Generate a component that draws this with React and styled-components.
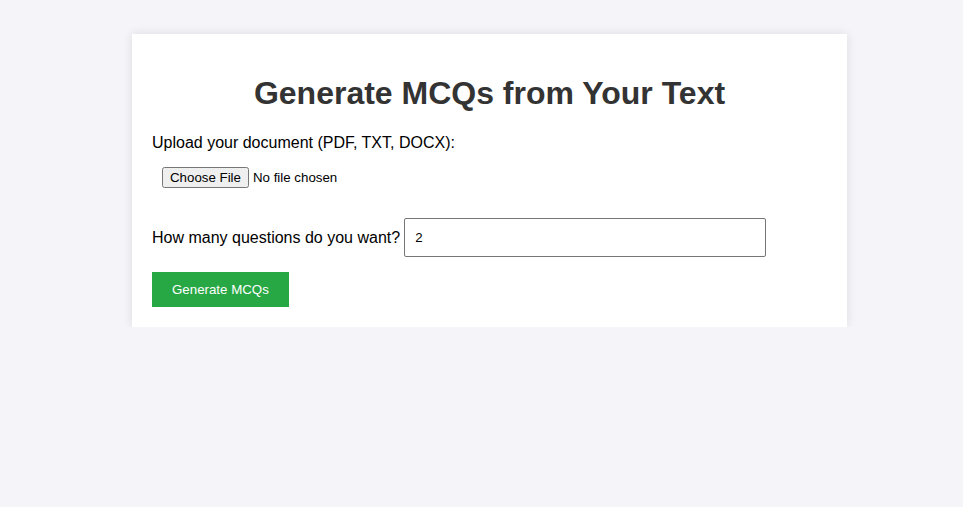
import React, { useState } from 'react'
import styled, { createGlobalStyle } from 'styled-components'

const GlobalStyle = createGlobalStyle`
  body {
    margin: 0;
    background-color: #f4f4f9;
    font-family: "Liberation Sans", Arial, sans-serif;
  }
`

const Page = styled.div`
  padding: 34px 116px 0 132px;
`
const Card = styled.div`
  background: #fff;
  padding: 20px;
  box-shadow: 0 0 10px rgba(0, 0, 0, 0.1);
`
const Title = styled.h1`
  text-align: center;
  color: #333;
  font-size: 32px;
  margin: 21px 0 22px;
`
const Label = styled.label`
  font-size: 16px;
  color: #000;
`
const FileInput = styled.input`
  display: block;
  margin: 15px 10px 30px;
  font-family: "Liberation Sans", Arial, sans-serif;
  font-size: 13.3px;
`
const Row = styled.div`
  display: flex;
  align-items: center;
  gap: 4px;
`
const NumberInput = styled.input`
  box-sizing: border-box;
  width: 362px;
  height: 39px;
  padding: 0 10px;
  border: 1px solid #767676;
  border-radius: 2px;
  font-family: "Liberation Sans", Arial, sans-serif;
  font-size: 13.3px;
`
const Button = styled.button`
  margin-top: 15px;
  padding: 10px 20px;
  background-color: #28a745;
  color: #fff;
  border: none;
  font-family: "Liberation Sans", Arial, sans-serif;
  font-size: 13.3px;
  cursor: pointer;
`

const App = () => {
  const [count, setCount] = useState(2)

  return (
    <Page>
      <GlobalStyle />
      <Card>
        <Title>Generate MCQs from Your Text</Title>
        <Label>Upload your document (PDF, TXT, DOCX):</Label>
        <FileInput type="file" />
        <Row>
          <Label>How many questions do you want?</Label>
          <NumberInput type="number" value={count} onChange={(e) => setCount(e.target.value)} />
        </Row>
        <Button>Generate MCQs</Button>
      </Card>
    </Page>
  )
}

export default App
